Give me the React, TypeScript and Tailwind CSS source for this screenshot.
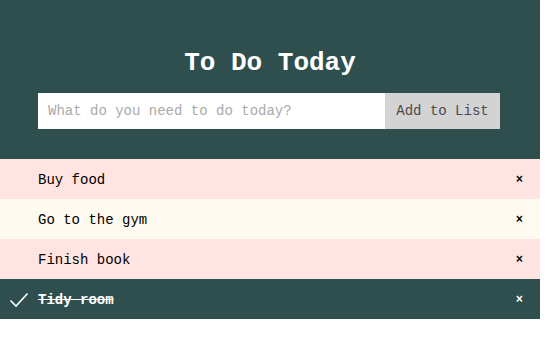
import React from "react";

const items = [
  { text: "Buy food", done: false, bg: "bg-[#ffe4e1]" },
  { text: "Go to the gym", done: false, bg: "bg-[#fffaf0]" },
  { text: "Finish book", done: false, bg: "bg-[#ffe4e1]" },
  { text: "Tidy room", done: true, bg: "bg-[#2f4f4f]" },
];

export default function App() {
  return (
    <div className="w-[540px] font-['Liberation_Mono','Courier_New',monospace]">
      <div className="h-[159px] bg-[#2f4f4f] flex flex-col pt-[48px]">
        <h1 className="text-[26px] leading-[30px] font-bold text-white text-center">To Do Today</h1>
        <div className="mt-[15px] ml-[38px] flex w-[462px] h-[36px]">
          <input
            className="flex-1 min-w-0 bg-white px-[10px] pt-[1px] text-[14px] text-black placeholder:text-[#a9a9a9] outline-none font-['Liberation_Mono','Courier_New',monospace]"
            placeholder="What do you need to do today?"
          />
          <button className="w-[115px] bg-[#d3d3d3] pt-[1px] text-[14px] text-[#4a4a4a] font-['Liberation_Mono','Courier_New',monospace]">
            Add to List
          </button>
        </div>
      </div>
      <ul>
        {items.map((it) => (
          <li key={it.text} className={`${it.bg} h-[40px] flex items-center pt-[2px] pr-[17px]`}>
            <div className="w-[38px] flex justify-center">
              {it.done && (
                <svg width="20" height="16" viewBox="0 0 20 16" fill="none">
                  <path d="M1.5 8.5 L7 14 L18.5 1.5" stroke="white" strokeWidth="1.6" />
                </svg>
              )}
            </div>
            <span
              className={`flex-1 text-[14px] ${
                it.done ? "text-white font-bold line-through" : "text-black"
              }`}
            >
              {it.text}
            </span>
            <span className={`text-[12px] font-bold leading-none ${it.done ? "text-white" : "text-black"}`}>×</span>
          </li>
        ))}
      </ul>
    </div>
  );
}
